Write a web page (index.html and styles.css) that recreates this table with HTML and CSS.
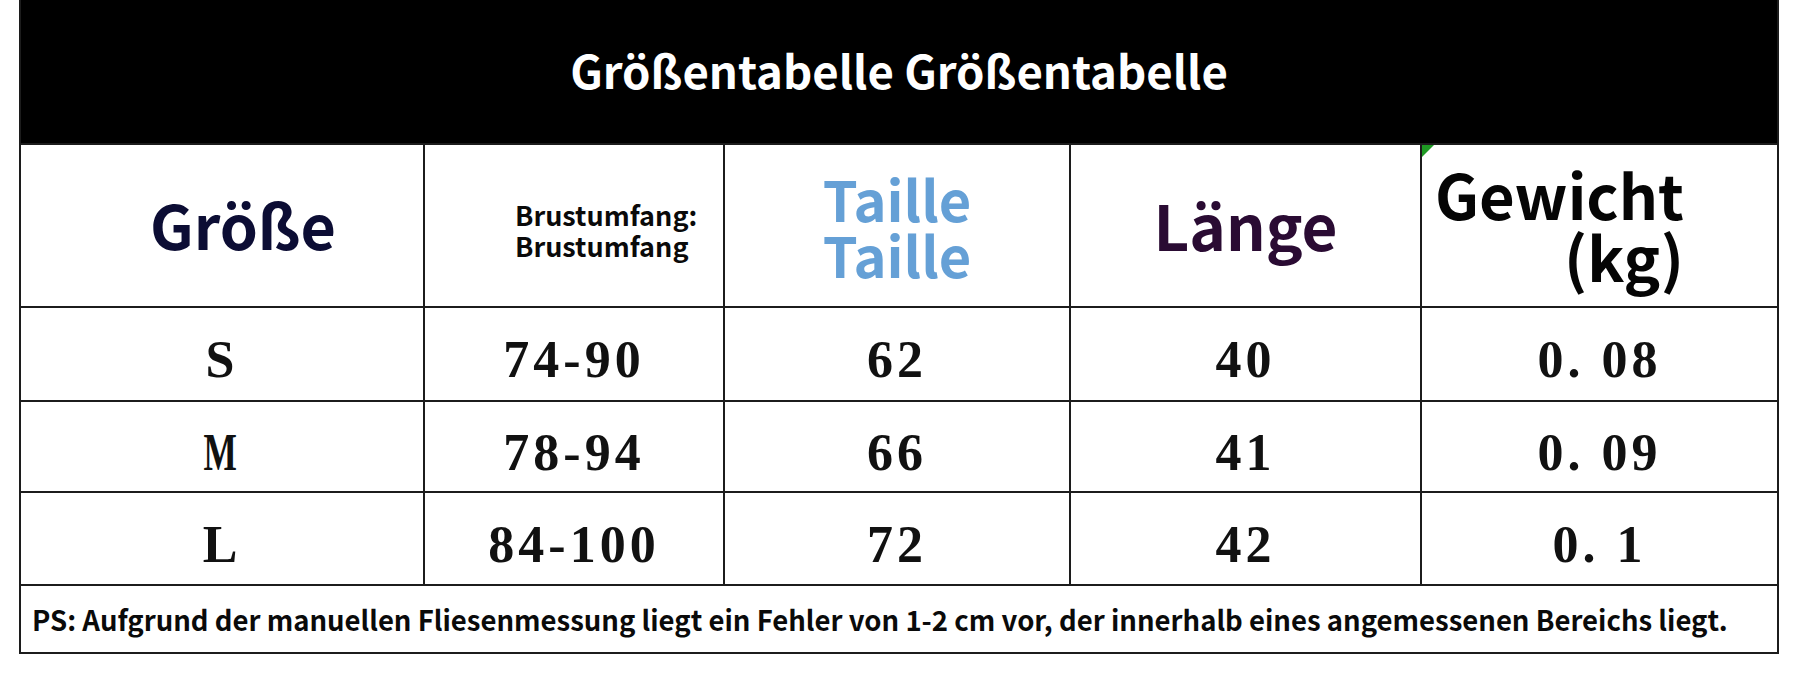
FILE: index.html
```html
<!DOCTYPE html>
<html lang="de">
<head>
<meta charset="utf-8">
<title>Größentabelle</title>
<link rel="stylesheet" href="styles.css">
</head>
<body>
<div class="chart">
  <div class="title">Größentabelle Größentabelle</div>

  <div class="hcell c-size"><span class="h-size">Größe</span></div>
  <div class="hcell c-chest">
    <div class="h-chest"><div class="ln">Brustumfang:</div><div class="ln">Brustumfang</div></div>
  </div>
  <div class="hcell c-waist">
    <div class="h-waist"><div class="ln">Taille</div><div class="ln">Taille</div></div>
  </div>
  <div class="hcell c-length"><span class="h-length">Länge</span></div>
  <div class="hcell c-weight">
    <div class="h-weight"><div class="ln">Gewicht</div><div class="ln">(kg)</div></div>
  </div>

  <div class="dcell">S</div>
  <div class="dcell">74-90</div>
  <div class="dcell">62</div>
  <div class="dcell">40</div>
  <div class="dcell">0. 08</div>

  <div class="dcell"><span class="narrow">M</span></div>
  <div class="dcell">78-94</div>
  <div class="dcell">66</div>
  <div class="dcell">41</div>
  <div class="dcell">0. 09</div>

  <div class="dcell">L</div>
  <div class="dcell">84-100</div>
  <div class="dcell">72</div>
  <div class="dcell">42</div>
  <div class="dcell">0. 1</div>

  <div class="note">PS: Aufgrund der manuellen Fliesenmessung liegt ein Fehler von 1-2 cm vor, der innerhalb eines angemessenen Bereichs liegt.</div>
</div>
</body>
</html>
```

FILE: styles.css
```css
html, body {
  margin: 0;
  padding: 0;
  background: #ffffff;
}

body {
  width: 1800px;
  height: 674px;
  overflow: hidden;
}

.chart {
  margin-left: 19px;
  width: 1756px;
  display: grid;
  grid-template-columns: 402px 298px 344px 349px 355px;
  grid-template-rows: 143px 161px 92px 89px 91px 66px;
  gap: 2px;
  padding: 0 2px 2px 2px;
  background: #1c1c1c;
  font-family: "Noto Sans CJK SC", "Noto Sans", sans-serif;
  font-weight: 700;
}

.title {
  grid-column: 1 / -1;
  background: #000000;
  color: #ffffff;
  font-size: 45.5px;
  line-height: 1;
  display: flex;
  align-items: center;
  justify-content: center;
  padding-bottom: 4px;
  box-sizing: border-box;
}

.hcell {
  background: #ffffff;
  display: flex;
  align-items: center;
  justify-content: center;
  box-sizing: border-box;
  position: relative;
}

.ln {
  display: block;
  white-space: nowrap;
}

.c-size {
  padding-left: 42px;
  padding-bottom: 4px;
}

.h-size {
  color: #0c0d34;
  font-size: 61px;
  line-height: 1;
}

.c-chest {
  justify-content: flex-start;
  padding-left: 90px;
  padding-top: 8px;
}

.h-chest {
  color: #0a0a0a;
  font-size: 27px;
  line-height: 31px;
}

.h-waist {
  color: #65a0d6;
  font-size: 56px;
  line-height: 56px;
  text-align: left;
}

.c-length {
  padding-bottom: 4px;
}

.h-length {
  color: #2a0b33;
  font-size: 62px;
  line-height: 1;
}

.c-weight {
  justify-content: flex-start;
  align-items: flex-start;
  padding-left: 13px;
  padding-top: 18px;
}

.c-weight::before {
  content: "";
  position: absolute;
  left: 0;
  top: 0;
  width: 0;
  height: 0;
  border-top: 12px solid #1f9a24;
  border-right: 12px solid transparent;
}

.h-weight {
  color: #050505;
  font-size: 61.5px;
  line-height: 62px;
  text-align: right;
}

.dcell {
  background: #ffffff;
  display: flex;
  align-items: center;
  justify-content: center;
  box-sizing: border-box;
  padding-top: 12px;
  font-family: "Liberation Serif", "Times New Roman", serif;
  font-weight: 700;
  font-size: 52px;
  line-height: 1;
  letter-spacing: 4px;
  color: #111111;
}

.narrow {
  display: inline-block;
  transform: scaleX(0.68);
}

.note {
  grid-column: 1 / -1;
  background: #ffffff;
  display: flex;
  align-items: center;
  padding-left: 11px;
  padding-top: 2px;
  box-sizing: border-box;
  font-size: 27.5px;
  line-height: 1;
  color: #0a0a0a;
  white-space: nowrap;
}
```
